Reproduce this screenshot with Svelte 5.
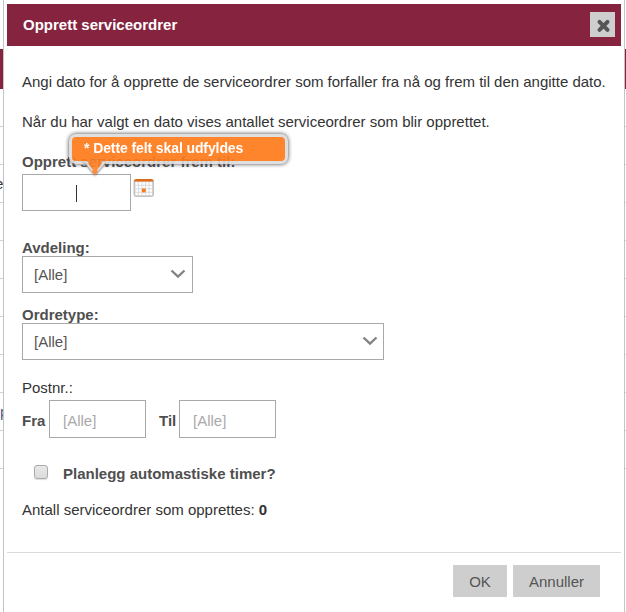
<script>
  const rows = ['', '', 'e', '', '', '', '', '', 'p', ''];
  let department = '[Alle]';
  let orderType = '[Alle]';
  let count = 0;
</script>

<div class="page">
  <div class="table">
    <div class="thead"></div>
    {#each rows as cell}
      <div class="row"><span>{cell}</span></div>
    {/each}
  </div>

  <section class="dialog">
    <header>
      <h1>Opprett serviceordrer</h1>
      <button class="close" aria-label="Lukk">
        <svg width="25" height="25" viewBox="0 0 25 25"><path d="M9.500 9.800L17.500 17.800M17.500 9.800L9.500 17.800" stroke="#555" stroke-width="4" stroke-linecap="round" /></svg>
      </button>
    </header>

    <div class="content">
      <p class="intro">Angi dato for å opprette de serviceordrer som forfaller fra nå og frem til den angitte dato.</p>
      <p class="hint">Når du har valgt en dato vises antallet serviceordrer som blir opprettet.</p>

      <div class="date-field">
        <div class="label">Opprett serviceordrer frem til:</div>
        <div class="date-line">
          <div class="box date"><i class="caret"></i></div>
          <svg class="calendar" width="22" height="20" viewBox="0 0 22 20">
            <rect x="0.500" y="1" width="20.500" height="18" rx="3" fill="#c2c2c2" />
            <rect x="2" y="3" width="17.500" height="14.500" rx="1" fill="#d9d9d9" />
            <path d="M2.500 5.500h17M2.500 9h17M2.500 12.500h17M2.500 16h17" stroke="#fff" stroke-width="2.500" stroke-dasharray="2.600 .9" />
            <path d="M1 3.500Q1 1 3.500 1H18Q20.500 1 20.500 3.500Z" fill="#e06a16" />
            <rect x="8.800" y="10.400" width="4" height="4" rx="1.300" fill="#f77a1c" />
          </svg>
        </div>
        <div class="tooltip">
          <span>* Dette felt skal udfyldes</span>
          <svg width="24" height="16" viewBox="0 0 24 16"><path d="M1 1H23L14 11.500H10Z" fill="#ddd" /><path d="M4.500 -1H19.500L18.500 3L14 9L15 10.500L12 14L9 10.500L10 9L5.500 3Z" fill="#ff8328" /></svg>
        </div>
      </div>

      <div class="label dep">Avdeling:</div>
      <div class="box select short">{department}
        <svg width="16" height="10" viewBox="0 0 16 10"><path d="M1.500 1.500L8 7.700L14.500 1.500" /></svg>
      </div>
      <div class="label type">Ordretype:</div>
      <div class="box select long">{orderType}
        <svg width="16" height="10" viewBox="0 0 16 10"><path d="M1.500 1.500L8 7.700L14.500 1.500" /></svg>
      </div>

      <div class="post">Postnr.:</div>
      <div class="range">
        <b class="from">Fra</b><div class="box zip">[Alle]</div>
        <b class="to">Til</b><div class="box zip">[Alle]</div>
      </div>

      <div class="check"><i></i><b>Planlegg automastiske timer?</b></div>
      <p class="total">Antall serviceordrer som opprettes: <b>{count}</b></p>
    </div>

    <footer>
      <button class="ok">OK</button>
      <button class="cancel">Annuller</button>
    </footer>
  </section>
</div>

<style>
  :global(body) { margin: 0; background: #fff; overflow: hidden; }
  .page {
    position: relative;
    width: 626px;
    height: 612px;
    overflow: hidden;
    font: 15px/20px "Liberation Sans", Arial, sans-serif;
    color: #333;
  }
  .page * { box-sizing: border-box; }
  .table { padding-top: 49px; }
  .thead { height: 40px; background: #862440; }
  .row { height: 38px; border-bottom: 1px solid #d0d0d0; display: flex; align-items: center; }
  .row span { margin-left: -5px; }
  .row:nth-child(10) span { margin-left: 0; color: #4c5a88; }
  .dialog {
    position: absolute;
    left: 3px;
    top: 0;
    width: 622px;
    height: 612px;
    padding: 4px 3px 0;
    border: solid #c4c4c4;
    border-width: 0 1px;
    background: #fff;
  }
  header {
    height: 42px;
    padding: 0 6px 0 16px;
    background: #862440;
    display: flex;
    justify-content: space-between;
    align-items: center;
  }
  h1 { margin: 0; font-size: 15px; line-height: 20px; color: #fff; }
  button { border: 0; padding: 0; margin: 0; font: inherit; color: #555; background: #cecece; }
  .close { width: 25px; height: 25px; display: block; margin-bottom: 1px; }
  .close svg { display: block; }
  .content { padding: 26px 0 0 15px; height: 506px; white-space: nowrap; }
  p { margin: 0; }
  .intro { letter-spacing: -.008px; }
  .hint { margin-top: 20px; }
  .date-field { position: relative; margin-top: 20px; }
  .label { height: 20px; font-weight: bold; color: #4f4f4f; }
  .date-line { display: flex; margin-top: 2px; }
  .box { border: 1px solid #a9a9a9; height: 37px; background: #fff; }
  .date { width: 109px; display: flex; justify-content: center; align-items: center; }
  .caret { width: 1px; height: 17px; background: #333; margin-top: 2px; }
  .calendar { margin: 4px 0 0 2px; }
  .tooltip {
    position: absolute;
    left: 47px;
    top: -18px;
    width: 219px;
    height: 30px;
    border: 3px solid #ddd;
    border-radius: 7px;
    background: #ff7b1c;
    box-shadow: 0 0 4px #333;
    opacity: .92;
    color: #fff;
    font-weight: bold;
    font-size: 14px;
    line-height: 24px;
    padding-left: 12px;
  }
  .tooltip span { display: block; letter-spacing: -.1px; margin-top: -1px; }
  .tooltip svg { position: absolute; left: 11px; top: 24px; overflow: visible; filter: drop-shadow(0 1px 1px #777); }
  .dep { margin-top: 27px; height: 18px; }
  .type { margin-top: 12px; height: 18px; }
  .select { display: flex; align-items: center; justify-content: space-between; padding: 0 6px 0 11px; color: #555; }
  .select svg { margin-bottom: 2px; fill: none; stroke: #848484; stroke-width: 2.4; }
  .short { width: 171px; }
  .long { width: 362px; padding-right: 5px; }
  .post { margin-top: 18px; }
  .range { display: flex; align-items: center; margin-top: 2px; color: #4f4f4f; }
  .range b { margin-top: 3px; }
  .from { width: 27px; }
  .to { width: 20px; margin-left: 13px; }
  .zip { width: 97px; height: 38px; padding: 10px 0 0 13px; line-height: 20px; color: #a9a9a9; }
  .check { display: flex; align-items: center; margin-top: 26px; padding-left: 12px; color: #4f4f4f; }
  .check i {
    width: 14px;
    height: 14px;
    margin: 0 15px 4px 0;
    border: 1px solid #aaa;
    border-radius: 3px;
    background: linear-gradient(#e8e8e8, #dcdcdc);
    box-shadow: 0 1px 1px #ddd;
  }
  .total { margin-top: 16px; }
  footer {
    border-top: 1px solid #dadada;
    padding: 12px 21px 0 0;
    display: flex;
    justify-content: flex-end;
    gap: 6px;
  }
  footer button { height: 32px; padding-top: 2px; }
  .ok { width: 54px; }
  .cancel { width: 87px; }
</style>
